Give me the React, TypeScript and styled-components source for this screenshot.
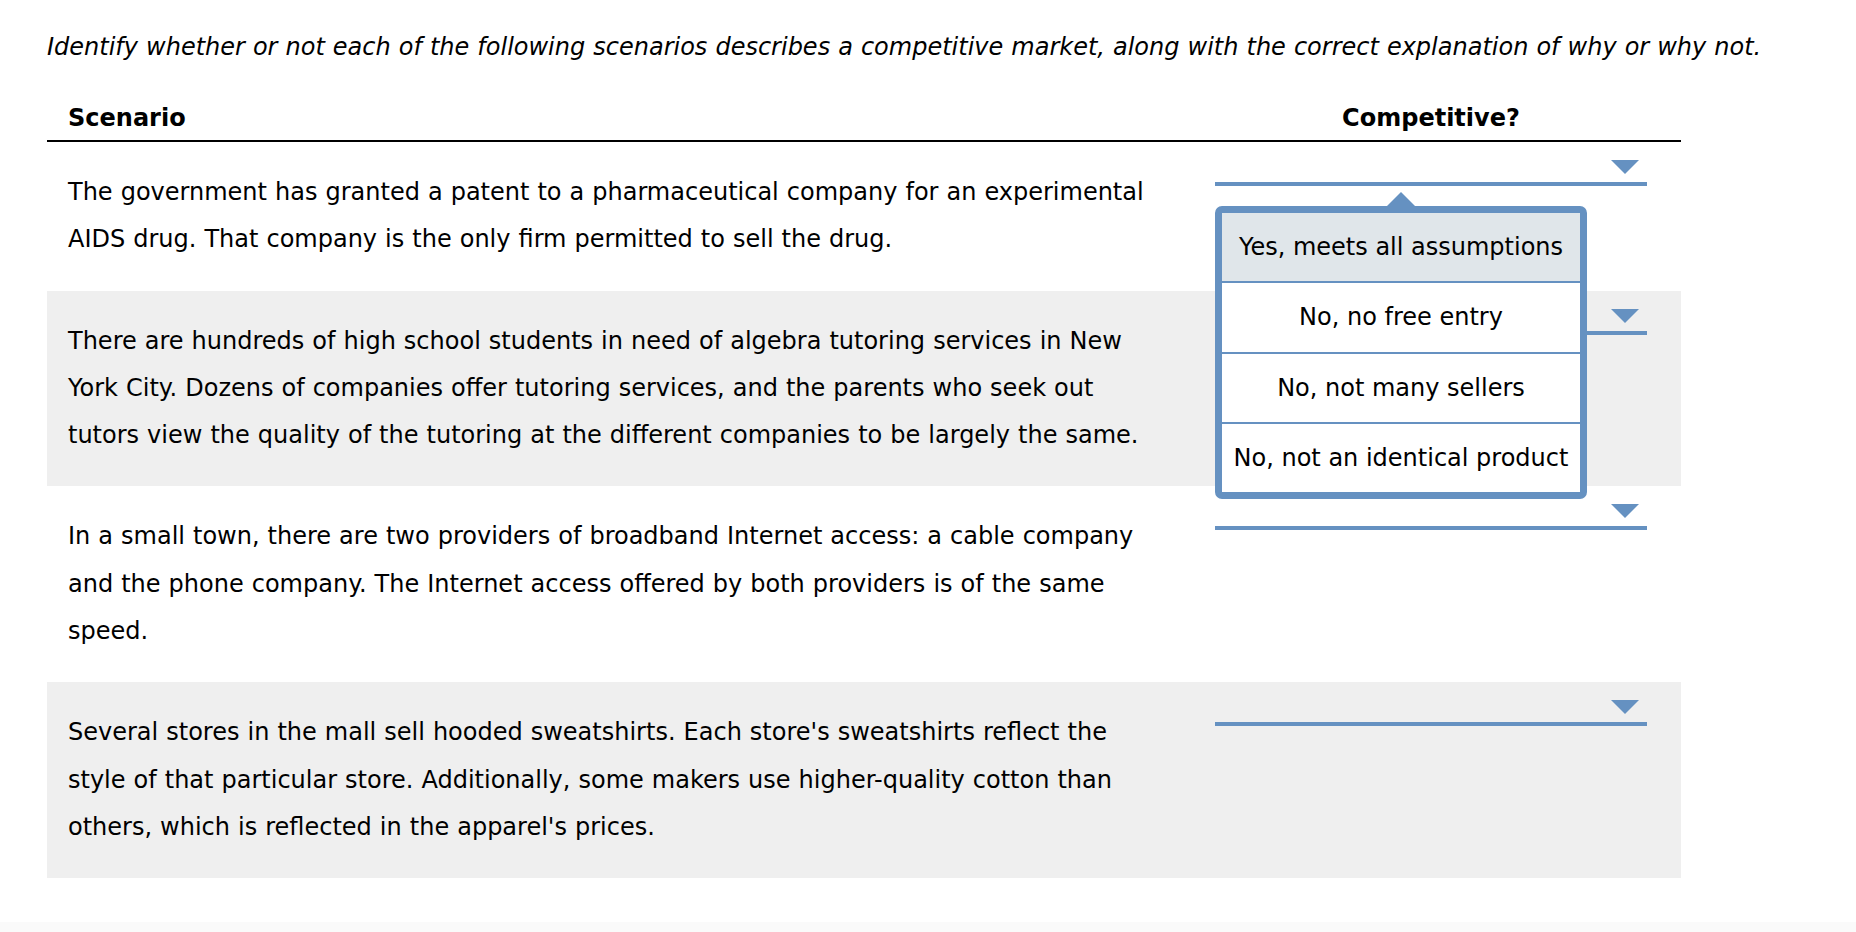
import React from "react";
import styled, { createGlobalStyle } from "styled-components";

const GlobalStyle = createGlobalStyle`
  html, body {
    margin: 0;
    padding: 0;
    background: #fff;
  }
  body {
    font-family: "DejaVu Sans", Verdana, sans-serif;
    color: #000;
  }
`;

const BLUE = "#6591c1";

const Page = styled.div`
  min-height: 932px;
  display: flex;
  flex-direction: column;
`;

const Content = styled.main`
  padding: 33px 0 0 47px;
`;

const Prompt = styled.p`
  margin: 0 0 43px;
  font-size: 24px;
  line-height: 28px;
  font-style: italic;
  word-spacing: 0.4px;
  white-space: nowrap;
`;

const Table = styled.div`
  width: 1634px;
  display: flex;
  flex-direction: column;
`;

const Row = styled.div<{ $shaded?: boolean }>`
  display: grid;
  grid-template-columns: 1134px 500px;
  background: ${({ $shaded }) => ($shaded ? "#efefef" : "transparent")};
`;

const HeadRow = styled(Row)`
  border-bottom: 2px solid #000;
`;

const HeadCell = styled.div<{ $center?: boolean }>`
  font-size: 24px;
  line-height: 28px;
  font-weight: bold;
  padding: 0 0 8px ${({ $center }) => ($center ? "0" : "21px")};
  text-align: ${({ $center }) => ($center ? "center" : "left")};
`;

const ScenarioText = styled.div`
  padding: 27px 0 27px 21px;
  font-size: 24px;
  line-height: 47.3px;
  word-spacing: 0.4px;
  white-space: nowrap;
`;

const ChoiceCell = styled.div`
  display: flex;
  justify-content: center;
  align-items: flex-start;
`;

const Dropdown = styled.div`
  position: relative;
  width: 432px;
  height: 44px;
  box-sizing: border-box;
  border-bottom: 4px solid ${BLUE};
  display: flex;
  justify-content: flex-end;
  align-items: flex-start;
  padding: 18px 8px 0 0;
  cursor: pointer;
`;

const Menu = styled.ul`
  position: absolute;
  top: 64px;
  left: 0;
  z-index: 10;
  width: 372px;
  box-sizing: border-box;
  margin: 0;
  padding: 0;
  list-style: none;
  background: #fff;
  border: 7px solid ${BLUE};
  border-radius: 7px;
`;

const Caret = styled.span`
  position: absolute;
  top: -21px;
  left: 165px;
  width: 0;
  height: 0;
  border-left: 14px solid transparent;
  border-right: 14px solid transparent;
  border-bottom: 14px solid ${BLUE};
`;

const Option = styled.li<{ $active?: boolean }>`
  height: 68.3px;
  line-height: 68.3px;
  font-size: 24px;
  text-align: center;
  white-space: nowrap;
  background: ${({ $active }) => ($active ? "#e0e6ea" : "#fff")};

  & + & {
    border-top: 2px solid ${BLUE};
  }
`;

const Footer = styled.div`
  margin-top: auto;
  height: 10px;
  background: #fafafa;
`;

const Arrow = () => (
  <svg width="28" height="14" viewBox="0 0 28 14">
    <polygon points="0,0 28,0 14,14" fill={BLUE} />
  </svg>
);

const scenarios: string[][] = [
  [
    "The government has granted a patent to a pharmaceutical company for an experimental",
    "AIDS drug. That company is the only firm permitted to sell the drug.",
  ],
  [
    "There are hundreds of high school students in need of algebra tutoring services in New",
    "York City. Dozens of companies offer tutoring services, and the parents who seek out",
    "tutors view the quality of the tutoring at the different companies to be largely the same.",
  ],
  [
    "In a small town, there are two providers of broadband Internet access: a cable company",
    "and the phone company. The Internet access offered by both providers is of the same",
    "speed.",
  ],
  [
    "Several stores in the mall sell hooded sweatshirts. Each store's sweatshirts reflect the",
    "style of that particular store. Additionally, some makers use higher-quality cotton than",
    "others, which is reflected in the apparel's prices.",
  ],
];

const options = [
  "Yes, meets all assumptions",
  "No, no free entry",
  "No, not many sellers",
  "No, not an identical product",
];

const App = () => {
  return (
    <Page>
      <GlobalStyle />
      <Content>
        <Prompt>
          Identify whether or not each of the following scenarios describes a
          competitive market, along with the correct explanation of why or why
          not.
        </Prompt>
        <Table>
          <HeadRow>
            <HeadCell>Scenario</HeadCell>
            <HeadCell $center>Competitive?</HeadCell>
          </HeadRow>
          {scenarios.map((lines, i) => (
            <Row key={i} $shaded={i % 2 === 1}>
              <ScenarioText>
                {lines.map((line, j) => (
                  <React.Fragment key={j}>
                    {j > 0 && <br />}
                    {line}
                  </React.Fragment>
                ))}
              </ScenarioText>
              <ChoiceCell>
                <Dropdown>
                  <Arrow />
                  {i === 0 && (
                    <Menu>
                      <Caret />
                      {options.map((opt, k) => (
                        <Option key={opt} $active={k === 0}>
                          {opt}
                        </Option>
                      ))}
                    </Menu>
                  )}
                </Dropdown>
              </ChoiceCell>
            </Row>
          ))}
        </Table>
      </Content>
      <Footer />
    </Page>
  );
};

export default App;
